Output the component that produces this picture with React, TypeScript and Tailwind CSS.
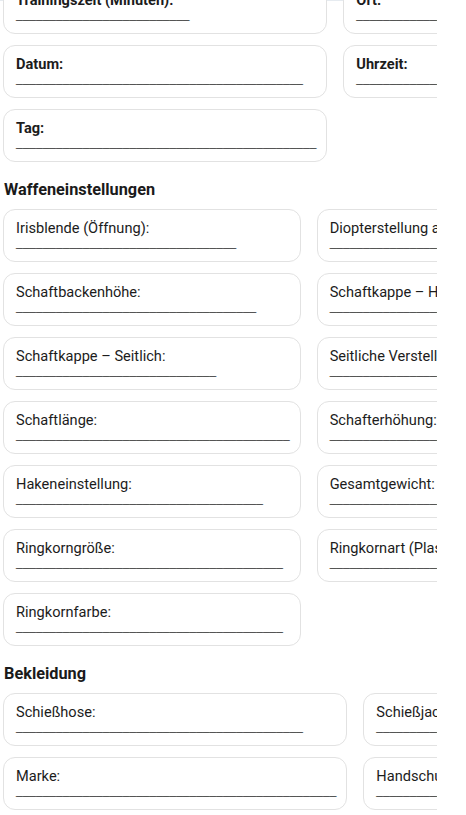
const line = (n: number) => "_".repeat(n);

type Field = { label: string; blanks: number };

const FieldCard = ({ label, blanks, bold }: Field & { bold?: boolean }) => (
  <div className="h-[53px] rounded-xl border border-[#e2e2e2] bg-white pl-3 pr-[10px] pt-2">
    <div
      className={`text-[14.6px] leading-5 text-[#1c1c1c] whitespace-nowrap ${
        bold ? "font-bold" : "font-normal"
      }`}
    >
      {label}
    </div>
    <div className="font-['Liberation_Sans',Arial,sans-serif] text-[12px] leading-[8px] text-[#444] whitespace-nowrap">
      {line(blanks)}
    </div>
  </div>
);

const Section = ({
  title,
  rows,
  bold,
  first,
}: {
  title?: string;
  rows: Field[][];
  bold?: boolean;
  first?: boolean;
}) => (
  <section className={first ? "" : "mt-4"}>
    {title && (
      <h2 className="mb-2 pl-px text-[16.3px] font-bold leading-[23px] text-[#1a1a1a]">
        {title}
      </h2>
    )}
    <div className="grid w-max grid-cols-[auto_auto] gap-x-4 gap-y-[11px]">
      {rows.flatMap((row, i) =>
        row.map((f, j) => (
          <FieldCard key={`${i}-${j}`} label={f.label} blanks={f.blanks} bold={bold} />
        ))
      )}
    </div>
  </section>
);

const general: Field[][] = [
  [
    { label: "Trainingszeit (Minuten):", blanks: 26 },
    { label: "Ort:", blanks: 30 },
  ],
  [
    { label: "Datum:", blanks: 43 },
    { label: "Uhrzeit:", blanks: 30 },
  ],
  [{ label: "Tag:", blanks: 45 }],
];

const weapon: Field[][] = [
  [
    { label: "Irisblende (Öffnung):", blanks: 33 },
    { label: "Diopterstellung am Visier:", blanks: 30 },
  ],
  [
    { label: "Schaftbackenhöhe:", blanks: 36 },
    { label: "Schaftkappe – Höhe:", blanks: 30 },
  ],
  [
    { label: "Schaftkappe – Seitlich:", blanks: 30 },
    { label: "Seitliche Verstellung:", blanks: 30 },
  ],
  [
    { label: "Schaftlänge:", blanks: 41 },
    { label: "Schafterhöhung:", blanks: 30 },
  ],
  [
    { label: "Hakeneinstellung:", blanks: 37 },
    { label: "Gesamtgewicht:", blanks: 30 },
  ],
  [
    { label: "Ringkorngröße:", blanks: 40 },
    { label: "Ringkornart (Plastik/Metall):", blanks: 30 },
  ],
  [{ label: "Ringkornfarbe:", blanks: 40 }],
];

const clothing: Field[][] = [
  [
    { label: "Schießhose:", blanks: 43 },
    { label: "Schießjacke:", blanks: 30 },
  ],
  [
    { label: "Marke:", blanks: 48 },
    { label: "Handschuhe:", blanks: 30 },
  ],
  [
    { label: "Schuhe:", blanks: 40 },
    { label: "Marke:", blanks: 30 },
  ],
];

export default function App() {
  return (
    <div className="h-[815px] w-[466px] overflow-hidden bg-white font-['Roboto','Noto_Sans',sans-serif]">
      <div className="h-full w-[437px] overflow-hidden">
        <div className="h-px bg-[#e6ebf0]" />
        <div className="-mt-[20px] pl-[3px]">
          <Section first bold rows={general} />
          <Section title="Waffeneinstellungen" rows={weapon} />
          <Section title="Bekleidung" rows={clothing} />
        </div>
      </div>
    </div>
  );
}
